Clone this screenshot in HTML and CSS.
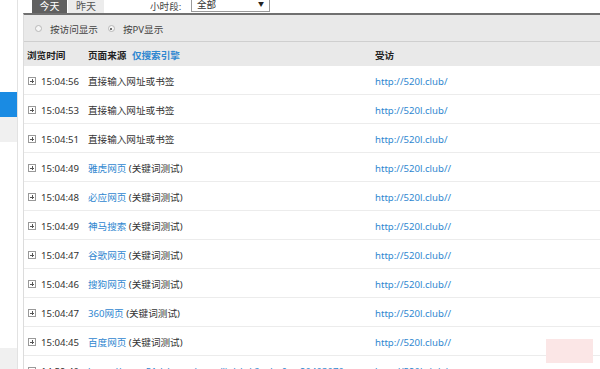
FILE: index.html
```html
<!DOCTYPE html>
<html lang="zh-CN">
<head>
<meta charset="utf-8">
<link rel="stylesheet" href="styles.css">
</head>
<body>
<div class="page">
  <aside class="side">
    <div class="side-gap"></div>
    <div class="side-item active"></div>
    <div class="side-item grey"></div>
    <div class="side-fill"></div>
    <div class="side-item grey tall"></div>
  </aside>
  <main class="main">
    <div class="topbar">
      <span class="tab on">今天</span>
      <span class="tab">昨天</span>
      <span class="hour-label">小时段:</span>
      <span class="select">全部<span class="arrow">▼</span></span>
    </div>
    <div class="panel">
      <div class="radios">
        <span class="radio"><span class="dot"></span>按访问显示</span>
        <span class="radio checked"><span class="dot"></span>按PV显示</span>
      </div>
      <div class="row head">
        <span class="c1">浏览时间</span>
        <span class="c2">页面来源 <a class="link hl">仅搜索引擎</a></span>
        <span class="c3">受访</span>
      </div>
      <div class="row"><span class="c1"><i class="plus"></i>15:04:56</span><span class="c2">直接输入网址或书签</span><span class="c3"><a class="link">http://520l.club/</a></span></div>
      <div class="row"><span class="c1"><i class="plus"></i>15:04:53</span><span class="c2">直接输入网址或书签</span><span class="c3"><a class="link">http://520l.club/</a></span></div>
      <div class="row"><span class="c1"><i class="plus"></i>15:04:51</span><span class="c2">直接输入网址或书签</span><span class="c3"><a class="link">http://520l.club/</a></span></div>
      <div class="row"><span class="c1"><i class="plus"></i>15:04:49</span><span class="c2"><a class="link">雅虎网页</a> (关键词测试)</span><span class="c3"><a class="link">http://520l.club//</a></span></div>
      <div class="row"><span class="c1"><i class="plus"></i>15:04:48</span><span class="c2"><a class="link">必应网页</a> (关键词测试)</span><span class="c3"><a class="link">http://520l.club//</a></span></div>
      <div class="row"><span class="c1"><i class="plus"></i>15:04:49</span><span class="c2"><a class="link">神马搜索</a> (关键词测试)</span><span class="c3"><a class="link">http://520l.club//</a></span></div>
      <div class="row"><span class="c1"><i class="plus"></i>15:04:47</span><span class="c2"><a class="link">谷歌网页</a> (关键词测试)</span><span class="c3"><a class="link">http://520l.club//</a></span></div>
      <div class="row"><span class="c1"><i class="plus"></i>15:04:46</span><span class="c2"><a class="link">搜狗网页</a> (关键词测试)</span><span class="c3"><a class="link">http://520l.club//</a></span></div>
      <div class="row"><span class="c1"><i class="plus"></i>15:04:47</span><span class="c2"><a class="link">360网页</a> (关键词测试)</span><span class="c3"><a class="link">http://520l.club//</a></span></div>
      <div class="row"><span class="c1"><i class="plus"></i>15:04:45</span><span class="c2"><a class="link">百度网页</a> (关键词测试)</span><span class="c3"><a class="link">http://520l.club//</a></span></div>
      <div class="row"><span class="c1"><i class="plus"></i>14:59:40</span><span class="c2"><a class="link">https://www.51dcheywtl.com/link/s.h?wd=t&amp;q=20403070</a></span><span class="c3"><a class="link">http://520l.club/</a></span></div>
    </div>
  </main>
  <div class="stamp"></div>
</div>
</body>
</html>
```
FILE: styles.css
```css
* { box-sizing: border-box; }
html, body { margin: 0; padding: 0; background: #fff; }
body {
  font-family: "Noto Sans", "Noto Sans CJK SC", sans-serif;
  font-size: 9.6px;
  color: #333;
  overflow: hidden;
  height: 369px;
}
.page { display: flex; width: 600px; height: 369px; position: relative; }

.side {
  width: 18px;
  flex: none;
  display: flex;
  flex-direction: column;
  border-right: 1px solid #e2e2e2;
}
.side-gap { height: 92px; }
.side-item { height: 25px; }
.side-item.active { background: #1a8be3; }
.side-item.grey { background: #f0f0f0; }
.side-item.tall { height: 21px; }
.side-fill { flex: 1; }

.main { flex: 1; margin-left: 5px; display: flex; flex-direction: column; min-width: 0; }

.topbar {
  height: 14px;
  display: flex;
  align-items: flex-end;
  padding-left: 9px;
  line-height: 13px;
}
.tab {
  width: 36px;
  height: 13px;
  margin-top: -1px;
  text-align: center;
  background: #ececec;
  color: #555;
  font-size: 10px;
  margin-right: 1px;
  overflow: hidden;
}
.tab.on { background: #606060; color: #fff; width: 35px; }
.hour-label { margin-left: 45px; width: 41px; color: #444; font-size: 9.6px; }
.select {
  width: 79px;
  height: 13px;
  margin-top: -1px;
  align-self: flex-start;
  border: 1px solid #9a9a9a;
  border-top: none;
  background: #fff;
  padding-left: 5px;
  display: flex;
  justify-content: space-between;
  line-height: 11px;
  color: #333;
}
.arrow { font-size: 6px; padding-right: 5px; color: #222; }

.panel {
  flex: 1;
  border-top: 2px solid #707070;
  border-left: 1px solid #dcdcdc;
}
.radios {
  height: 27px;
  padding-top: 1px;
  background: #e9e9e9;
  border-bottom: 1px solid #cfcfcf;
  display: flex;
  align-items: center;
  padding-left: 11px;
  gap: 10px;
  color: #444;
}
.radio { display: flex; align-items: center; gap: 8px; }
.radio .dot {
  width: 7px; height: 7px;
  border-radius: 50%;
  border: 1px solid #b8b8b8;
  background: #f6f6f6;
  position: relative;
}
.radio.checked .dot::after {
  content: "";
  position: absolute;
  left: 1.5px; top: 1.5px;
  width: 2px; height: 2px;
  border-radius: 50%;
  background: #444;
}

.row {
  display: grid;
  grid-template-columns: 64px 287px 1fr;
  height: 29px;
  padding-top: 2px;
  align-items: center;
  border-bottom: 1px solid #ececec;
  white-space: nowrap;
}
.row.head {
  height: 24px;
  background: #e9e9e9;
  border-bottom: none;
  font-weight: bold;
  color: #222;
}
.row.head .c1 { padding-left: 3px; }
.c1 { padding-left: 4px; display: flex; align-items: center; }
.c2, .c3 { overflow: hidden; }
.link { color: #2f87d0; text-decoration: none; }
.hl { margin-left: 3px; }
.plus {
  width: 8px; height: 8px;
  border: 1px solid #999;
  position: relative;
  margin-right: 5px;
  flex: none;
}
.plus::before, .plus::after {
  content: "";
  position: absolute;
  background: #555;
}
.plus::before { left: 1px; top: 2.5px; width: 4px; height: 1px; }
.plus::after { left: 2.5px; top: 1px; width: 1px; height: 4px; }

.stamp {
  position: absolute;
  left: 546px; top: 339px;
  width: 47px; height: 24px;
  background: #fbe6e6;
}
```
